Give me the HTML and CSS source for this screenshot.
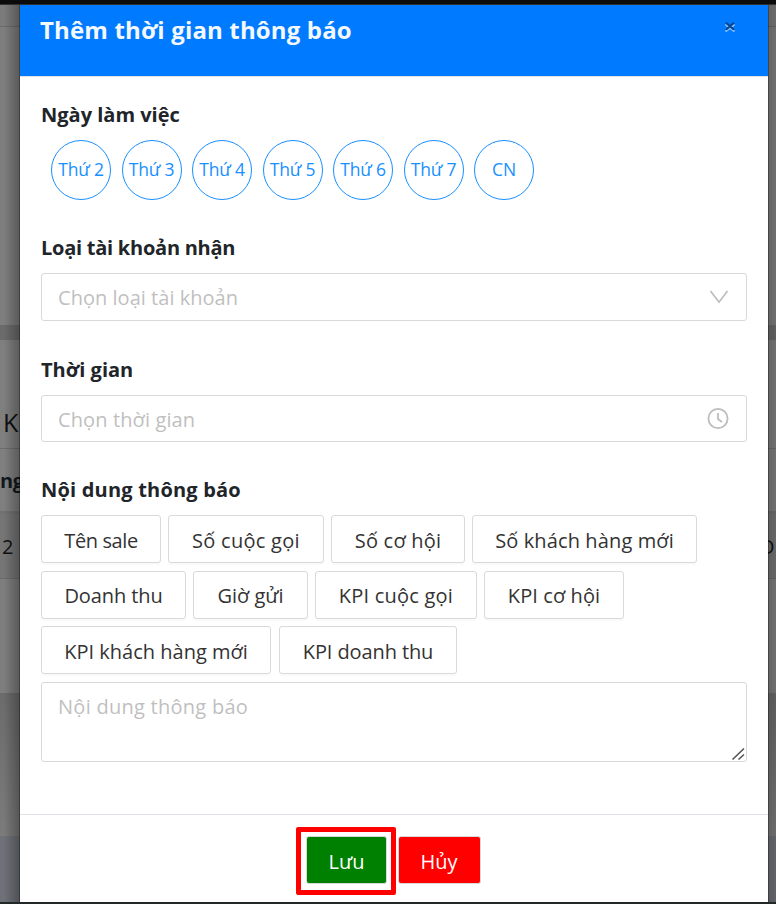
FILE: index.html
```html
<!DOCTYPE html>
<html lang="vi">
<head>
<meta charset="utf-8">
<title>Thêm thời gian thông báo</title>
<link rel="stylesheet" href="styles.css">
</head>
<body>
<div class="screen">
  <aside class="backdrop left">
    <div class="topbar"></div>
    <div class="panel"></div>
    <div class="divider"></div>
    <div class="heading">K</div>
    <div class="thead">ng</div>
    <div class="row">2</div>
    <div class="blank"></div>
    <div class="base"></div>
    <div class="foot"></div>
  </aside>
  <main class="modal">
    <header class="modal-header">
      <h1 class="title">Thêm thời gian thông báo</h1>
      <button class="close" aria-label="Đóng">
        <svg width="12" height="12" viewBox="0 0 12 12" fill="none" stroke-width="2"><path d="M1.5 3.5L10.5 10.5M10.5 3.5L1.5 10.5" stroke="#8fc3ff"/><path d="M2 1.8L10 8.8M10 1.8L2 8.8" stroke="#06458d"/></svg>
      </button>
    </header>
    <section class="modal-body">
      <h2 class="label l-days">Ngày làm việc</h2>
      <div class="days">
        <button class="day">Thứ 2</button>
        <button class="day">Thứ 3</button>
        <button class="day">Thứ 4</button>
        <button class="day">Thứ 5</button>
        <button class="day">Thứ 6</button>
        <button class="day">Thứ 7</button>
        <button class="day">CN</button>
      </div>
      <h2 class="label l-account">Loại tài khoản nhận</h2>
      <div class="field select">
        <span class="hint-account">Chọn loại tài khoản</span>
        <svg class="chevron" width="20" height="14" viewBox="0 0 20 14" fill="none" stroke="#bdbdbd" stroke-width="1.7"><path d="M1.5 1L10 12.2L18.500 1"/></svg>
      </div>
      <h2 class="label l-time">Thời gian</h2>
      <div class="field time">
        <span class="hint-time">Chọn thời gian</span>
        <svg class="clock" width="22" height="22" viewBox="0 0 22 22" fill="none" stroke="#bdbdbd" stroke-width="1.8"><circle cx="11" cy="10.500" r="9.6"/><path d="M11 5V11L15 14"/></svg>
      </div>
      <h2 class="label l-content">Nội dung thông báo</h2>
      <div class="chips">
        <div class="chip-row">
          <button class="chip w-sale">Tên sale</button>
          <button class="chip w-calls">Số cuộc gọi</button>
          <button class="chip w-chance">Số cơ hội</button>
          <button class="chip w-customers">Số khách hàng mới</button>
        </div>
        <div class="chip-row middle">
          <button class="chip w-revenue">Doanh thu</button>
          <button class="chip w-hour">Giờ gửi</button>
          <button class="chip w-kpi-calls">KPI cuộc gọi</button>
          <button class="chip w-kpi-chance">KPI cơ hội</button>
        </div>
        <div class="chip-row last">
          <button class="chip w-kpi-customers">KPI khách hàng mới</button>
          <button class="chip w-kpi-revenue">KPI doanh thu</button>
        </div>
      </div>
      <div class="area">
        <span class="hint-content">Nội dung thông báo</span>
        <svg class="grip" width="14" height="14" viewBox="0 0 14 14" fill="none" stroke="#555" stroke-width="1.6"><path d="M1.500 12.500L13 1.500M7.500 12.500L13 7.500"/></svg>
      </div>
    </section>
    <footer class="modal-footer">
      <div class="highlight"><button class="action save">Lưu</button></div>
      <button class="action cancel">Hủy</button>
    </footer>
  </main>
  <aside class="backdrop right">
    <div class="topbar"></div>
    <div class="panel"></div>
    <div class="divider"></div>
    <div class="heading"></div>
    <div class="thead"></div>
    <div class="row">D</div>
    <div class="blank"></div>
    <div class="base"></div>
    <div class="foot"></div>
  </aside>
</div>
</body>
</html>
```
FILE: styles.css
```css
* { box-sizing: border-box; }
body {
  margin: 0;
  background: #0b0b0b;
  font-family: "Open Sans", "Noto Sans", sans-serif;
  font-size: 20px;
  color: #212529;
}
button { font: inherit; margin: 0; padding: 0; cursor: pointer; white-space: nowrap; }
.screen {
  width: 776px;
  height: 904px;
  padding: 5px 0 2px;
  display: grid;
  grid-template-columns: 20px 748px 8px;
  background: linear-gradient(#0b0b0b 4px, #303030 4px, #303030 902px, #222826 902px);
  overflow: hidden;
}

.backdrop { overflow: hidden; position: relative; color: #111; }
.backdrop::after { content: ""; position: absolute; inset: 0; }
.left::after { background: linear-gradient(90deg, transparent 20%, rgba(0,0,0,.28) 95%, rgba(0,0,0,.5) 95%); }
.right::after { background: linear-gradient(90deg, rgba(0,0,0,.45) 1px, rgba(0,0,0,.2) 1px, rgba(0,0,0,.13)); }
.topbar { height: 22px; background: #7b7b7b; border-bottom: 1px solid #6b6b6b; }
.panel { height: 298px; background: #7e7e7e; }
.divider { height: 15px; background: #6b6b6b; }
.heading { height: 109px; padding: 66px 0 0 3px; font-size: 25px; line-height: 32px; background: #7f7f7f; border-bottom: 1px solid #6d6d6d; }
.thead { height: 65px; line-height: 64px; font-weight: 700; font-size: 20px; letter-spacing: -.5px; color: #101820; background: #7f7f7f; border-bottom: 3px solid #6f7173; }
.row { height: 65px; padding-left: 2px; line-height: 66px; background: #757575; border-bottom: 1px solid #6b6b6b; }
.right .row { padding: 0; text-indent: -8px; }
.blank { height: 114px; background: #7e7e7e; }
.base { height: 143px; background: linear-gradient(#6b6b6b, #7b7b7b); }
.foot { height: 66px; background: #6e7177; }

.modal { background: #fff; display: flex; flex-direction: column; }
.modal-header {
  height: 72px;
  background: #007bff;
  border-bottom: 1px solid #dee2e6;
  padding: 8px 32px 0 20px;
  display: flex;
  justify-content: space-between;
}
.title { margin: 0; font-size: 24px; line-height: 34px; font-weight: 700; letter-spacing: .15px; color: #f4f8ff; white-space: nowrap; }
.close { width: 12px; height: 12px; margin-top: 8px; border: 0; background: none; display: flex; }
.modal-body { padding: 24px 21px 0; height: 737px; }
.label { margin: 0; height: 28px; line-height: 28px; font-size: 20px; font-weight: 700; white-space: nowrap; letter-spacing: -.25px; }
.l-days { letter-spacing: 0; }
.l-time { letter-spacing: 0; }
.l-content { letter-spacing: .2px; }

.days { display: flex; gap: 10.5px; padding: 11px 0 0 10px; height: 105px; }
.day { width: 60px; height: 60px; padding-bottom: 2px; border: 1px solid #1890ff; border-radius: 50%; background: #fff; color: #1890ff; font-size: 17.5px; letter-spacing: -.2px; }

.field {
  width: 706px;
  border: 1px solid #d9d9d9;
  border-radius: 3px;
  display: flex;
  align-items: center;
  justify-content: space-between;
  padding: 0 17px 0 16px;
  color: #bfbfbf;
}
.select { height: 48px; margin: 11px 0 35px; }
.time { height: 47px; margin: 11px 0 34px; }
.hint-account { letter-spacing: .03px; }
.hint-time { letter-spacing: .12px; padding-top: 1px; }
.hint-content { letter-spacing: .27px; }

.chips { display: flex; flex-direction: column; gap: 8px; margin-top: 11px; }
.chip-row { display: flex; gap: 7px; }
.chip-row.last { gap: 8px; margin-top: -1px; }
.chip {
  height: 48px;
  padding-top: 2px;
  border: 1px solid #d9d9d9;
  border-radius: 3px;
  background: #fff;
  color: #333;
  box-shadow: 0 2px 0 rgba(0,0,0,.02);
}
.middle .chip { padding-top: 0; }
.w-sale { width: 120px; letter-spacing: -.4px; }
.w-calls { width: 156px; letter-spacing: .27px; }
.w-chance { width: 134px; letter-spacing: .2px; }
.w-customers { width: 225px; letter-spacing: .12px; }
.w-revenue { width: 145px; letter-spacing: -.1px; }
.w-hour { width: 115px; }
.w-kpi-calls { width: 162px; letter-spacing: .22px; }
.w-kpi-chance { width: 140px; letter-spacing: .1px; }
.w-kpi-customers { width: 230px; }
.w-kpi-revenue { width: 178px; letter-spacing: -.1px; }

.area {
  width: 706px;
  height: 80px;
  margin-top: 8px;
  border: 1px solid #d9d9d9;
  border-radius: 3px;
  padding: 8px 1px 0 16px;
  line-height: 32px;
  color: #bfbfbf;
  display: flex;
  justify-content: space-between;
}
.grip { align-self: flex-end; }

.modal-footer { height: 88px; border-top: 1px solid #dee2e6; padding: 12px 0 0 276px; display: flex; align-items: flex-start; gap: 1.500px; }
.highlight { width: 100px; height: 68px; border: 5px solid #f00; border-radius: 2px; padding: 4px 0 0 5px; }
.action { height: 48px; border: 1px solid #d9d9d9; border-radius: 3px; color: #fff; padding-top: 3px; }
.save { width: 81px; background: #008000; }
.cancel { width: 83px; background: #f00; margin-top: 9px; }
```
